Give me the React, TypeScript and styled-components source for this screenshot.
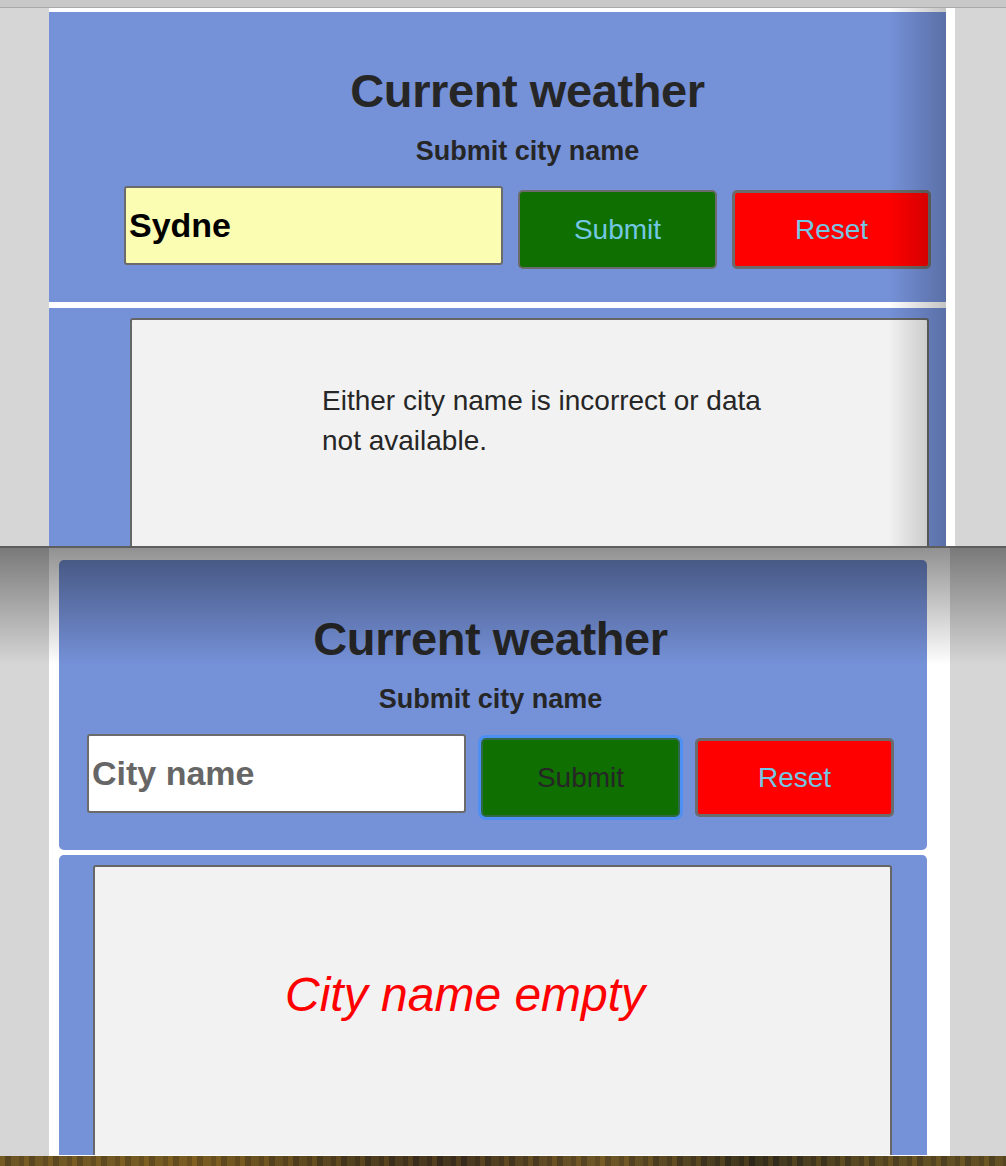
import React from "react";
import styled, {createGlobalStyle} from "styled-components";

const GlobalStyle = createGlobalStyle`
    html, body {
        margin: 0;
        padding: 0;
    }

    body {
        background: #d6d6d6;
        font-family: "Liberation Sans", Arial, sans-serif;
        color: #262626;
    }
`

type FormPanelProps = {
    value?: string
    focused?: boolean
    offset: number
    rounded?: boolean
}

const FormPanel = ({value, focused, offset, rounded}: FormPanelProps) => (
    <Panel $rounded = {rounded}>
        <Content $offset = {offset}>
            <Title>Current weather</Title>
            <Subtitle>Submit city name</Subtitle>
            <FormRow>
                <CityInput type = "text" placeholder = "City name" value = {value ?? ""} readOnly
                           $filled = {!!value}/>
                <Button type = "button" $bg = "#0f6f00" $focused = {focused}>Submit</Button>
                <Button type = "button" $bg = "#ff0000" $thick>Reset</Button>
            </FormRow>
        </Content>
    </Panel>
)

export default function App() {
    return (
        <>
            <GlobalStyle/>
            <TopShot>
                <TopBar/>
                <TopFrame>
                    <FormPanel value = "Sydne" offset = {72}/>
                    <ResultPanel>
                        <ResultBox $offset = {81}>
                            <ErrorText>Either city name is incorrect or data not available.</ErrorText>
                        </ResultBox>
                    </ResultPanel>
                    <EdgeShade/>
                </TopFrame>
            </TopShot>
            <BottomShot>
                <BottomFrame>
                    <FormPanel focused offset = {25} rounded/>
                    <ResultPanel $rounded $height = {300}>
                        <ResultBox $offset = {34}>
                            <EmptyText>City name empty</EmptyText>
                        </ResultBox>
                    </ResultPanel>
                </BottomFrame>
                <Ground/>
                <TopShade/>
            </BottomShot>
        </>
    )
}

const TopShot = styled.div`
    height: 546px;
    display: flex;
    flex-direction: column;
`

const TopBar = styled.div`
    height: 7px;
    background: #c8c8c8;
    border-bottom: 1px solid #a9a9a9;
`

const TopFrame = styled.div`
    position: relative;
    flex: 1;
    margin-left: 49px;
    width: 906px;
    box-sizing: border-box;
    padding: 4px 9px 0 0;
    background: #ffffff;
    display: flex;
    flex-direction: column;
    gap: 6px;
    overflow: hidden;
`

const EdgeShade = styled.div`
    position: absolute;
    top: 0;
    bottom: 0;
    right: 9px;
    width: 58px;
    background: linear-gradient(to right, rgba(0, 0, 0, 0), rgba(0, 0, 0, 0.23));
    pointer-events: none;
`

const BottomShot = styled.div`
    position: relative;
    height: 618px;
    border-top: 2px solid #5e5e5e;
    display: flex;
    flex-direction: column;
`

const BottomFrame = styled.div`
    margin-left: 49px;
    width: 901px;
    height: 608px;
    box-sizing: border-box;
    padding: 12px 23px 0 10px;
    background: #ffffff;
    display: flex;
    flex-direction: column;
    gap: 5px;
    overflow: hidden;
`

const TopShade = styled.div`
    position: absolute;
    top: 0;
    left: 0;
    right: 0;
    height: 117px;
    background: linear-gradient(to bottom, rgba(0, 0, 0, 0.43), rgba(0, 0, 0, 0));
    pointer-events: none;
`

const Ground = styled.div`
    height: 10px;
    background: repeating-linear-gradient(90deg,
    rgba(150, 110, 30, 0.25) 0 5px,
    rgba(35, 28, 18, 0.25) 5px 11px,
    rgba(120, 95, 35, 0.2) 11px 19px,
    rgba(60, 45, 20, 0.25) 19px 24px),
    linear-gradient(90deg, #6a5426, #7a5c22 20%, #4a3a1e 35%, #3a2c1e 45%, #6e5628 60%, #2f2a1c 75%, #5a4a24 88%, #5d4d24);
`

const Panel = styled.div<{ $rounded?: boolean }>`
    height: 290px;
    flex-shrink: 0;
    box-sizing: border-box;
    padding-top: 52px;
    background: #7591d8;
    border-radius: ${props => props.$rounded ? '5px' : '0'};
`

const Content = styled.div<{ $offset: number }>`
    width: 813px;
    margin-left: ${props => props.$offset}px;
    display: flex;
    flex-direction: column;
    align-items: center;
`

const Title = styled.h1`
    margin: 0;
    font-size: 47px;
    line-height: 54px;
    font-weight: 700;
    letter-spacing: -0.4px;
    color: #262626;
`

const Subtitle = styled.h3`
    margin: 18px 0 19px;
    font-size: 27px;
    line-height: 31px;
    font-weight: 700;
    color: #262626;
`

const FormRow = styled.div`
    display: flex;
    align-items: flex-start;
    gap: 15px;
`

const CityInput = styled.input<{ $filled: boolean }>`
    box-sizing: border-box;
    width: 379px;
    height: 79px;
    padding: 0 3px;
    border: 2px solid #6b6b6b;
    border-radius: 3px;
    background: ${props => props.$filled ? '#fbfdb2' : '#ffffff'};
    font-family: "Liberation Sans", Arial, sans-serif;
    font-size: 34px;
    font-weight: 700;
    color: #000000;
    outline: none;

    &::placeholder {
        color: #666666;
    }
`

const Button = styled.button<{ $bg: string, $focused?: boolean, $thick?: boolean }>`
    box-sizing: border-box;
    width: 199px;
    height: 79px;
    margin-top: 4px;
    border: ${props => props.$thick ? '3px' : '2px'} solid ${props => props.$focused ? '#2f6a48' : '#6b6b6b'};
    border-radius: 5px;
    background: ${props => props.$bg};
    font-family: "Liberation Sans", Arial, sans-serif;
    font-size: 28px;
    color: ${props => props.$focused ? '#262626' : '#74c7e3'};
    box-shadow: ${props => props.$focused ? '0 0 0 3px #4d8ff2' : 'none'};
    cursor: pointer;
`

const ResultPanel = styled.div<{ $rounded?: boolean, $height?: number }>`
    flex: ${props => props.$height ? `0 0 ${props.$height}px` : '1'};
    padding-top: 10px;
    box-sizing: border-box;
    background: #7591d8;
    border-radius: ${props => props.$rounded ? '5px 5px 0 0' : '0'};
    overflow: hidden;
`

const ResultBox = styled.div<{ $offset: number }>`
    width: 799px;
    height: 340px;
    box-sizing: border-box;
    margin-left: ${props => props.$offset}px;
    border: 2px solid #666666;
    border-bottom: none;
    border-radius: 3px 3px 0 0;
    background: #f2f2f2;
    overflow: hidden;
`

const ErrorText = styled.p`
    width: 460px;
    margin: 61px 0 0 190px;
    font-size: 28px;
    line-height: 40px;
    color: #262626;
`

const EmptyText = styled.p`
    margin: 100px 0 0 190px;
    font-size: 48px;
    line-height: 55px;
    font-style: italic;
    color: #ff0000;
`
